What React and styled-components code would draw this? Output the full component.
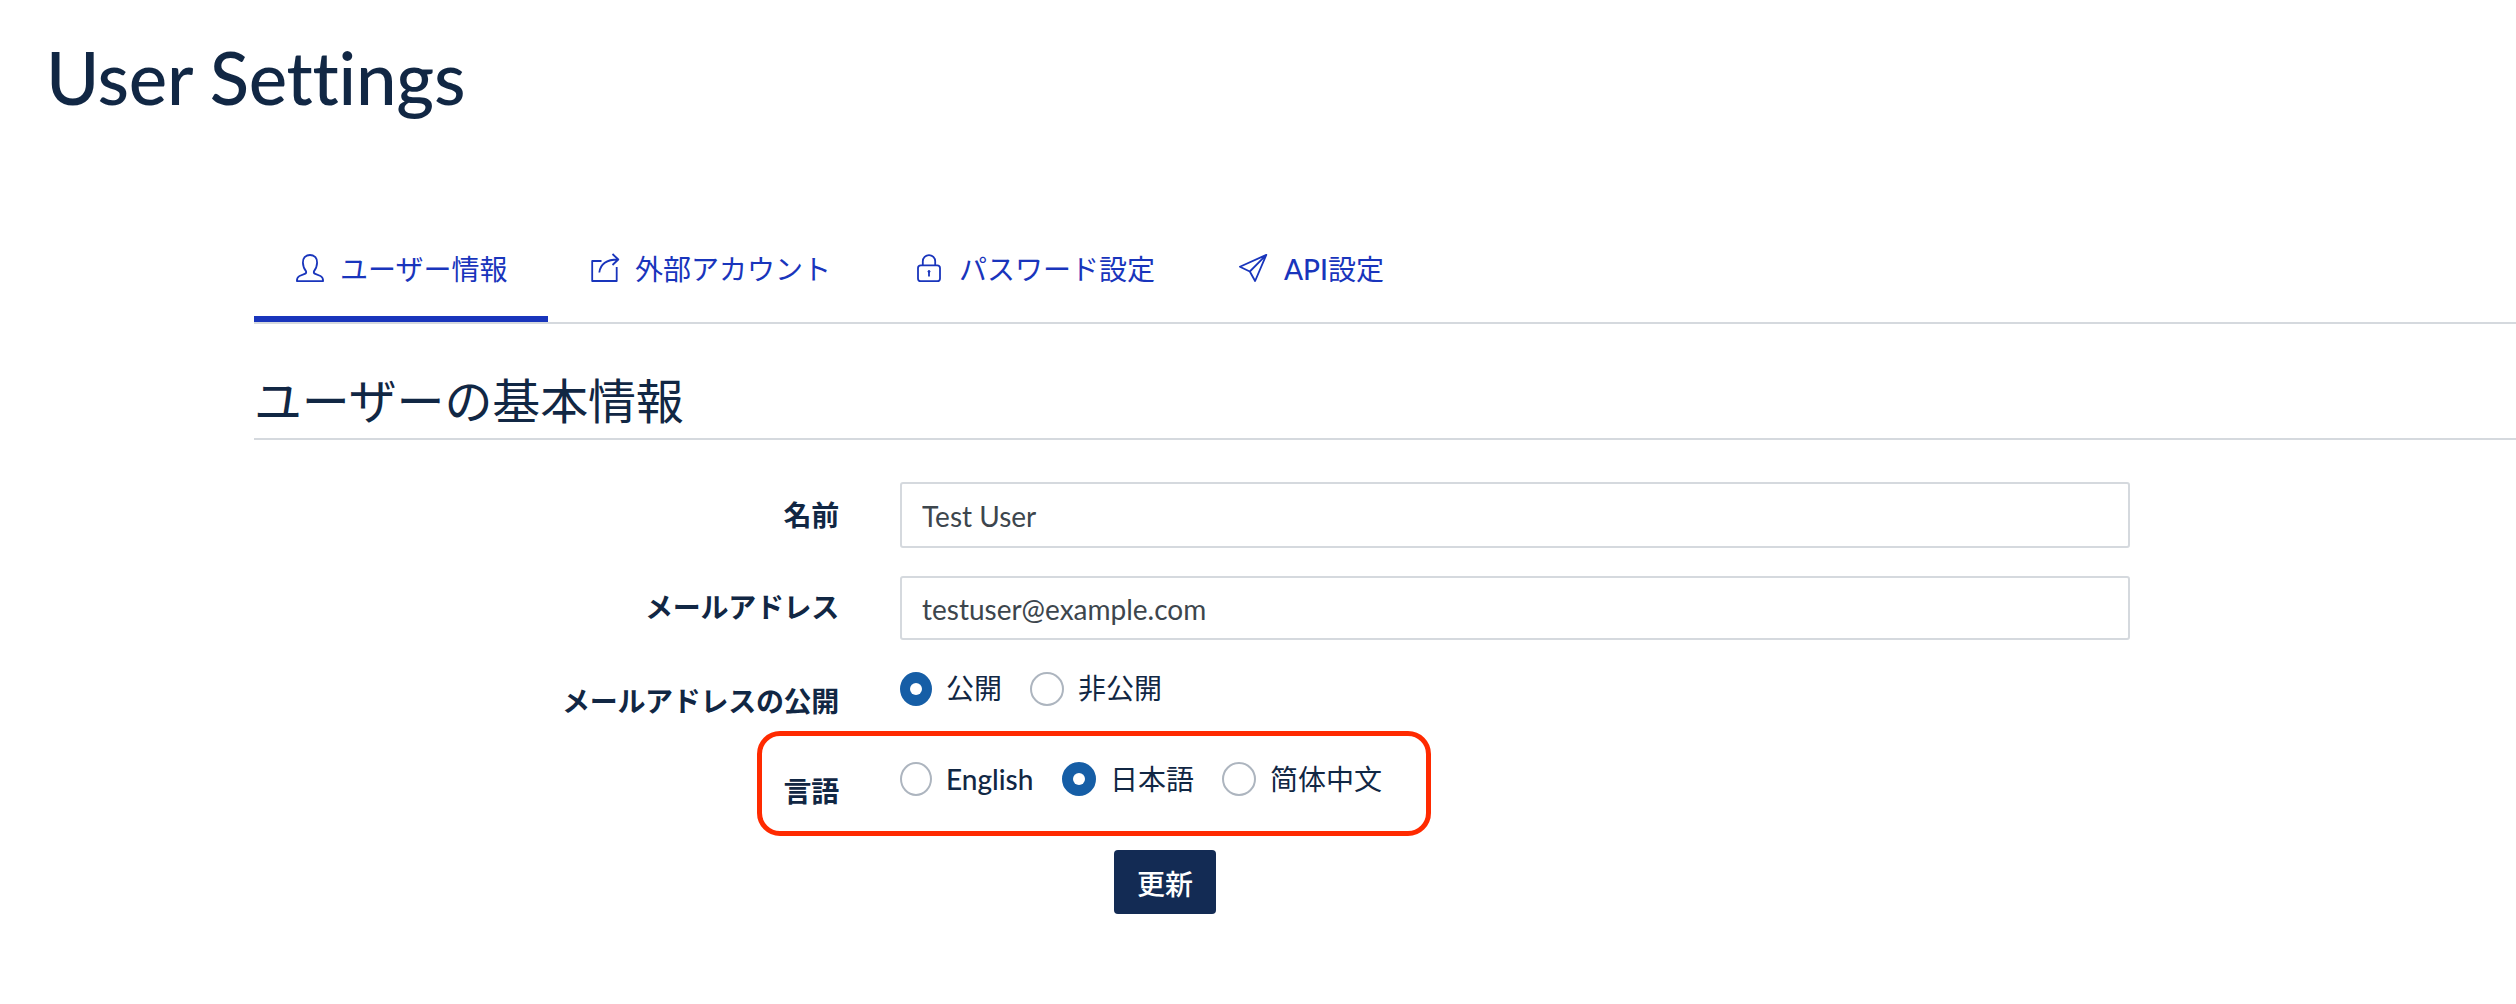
import React from 'react';
import styled, { createGlobalStyle } from 'styled-components';

const GlobalStyle = createGlobalStyle`
  *, *::before, *::after { box-sizing: border-box; }
  body {
    margin: 0;
    background: #fff;
    color: #112744;
    font-family: Lato, "Noto Sans CJK JP", sans-serif;
    font-size: 28px;
    font-variant-ligatures: none;
    overflow: hidden;
  }
`;

const Page = styled.main`
  height: 1004px;
  padding-top: 29px;
  overflow: hidden;
`;

const Title = styled.h1`
  margin: 0 0 0 46px;
  height: 96px;
  line-height: 96px;
  font-size: 72.5px;
  font-weight: 500;
  letter-spacing: -0.25px;
  white-space: nowrap;
`;

const Content = styled.section`
  margin: 87px 0 0 254px;
`;

const TabBar = styled.nav`
  display: flex;
  height: 112px;
  border-bottom: 2px solid #d5d9de;
`;

const Tab = styled.a`
  display: flex;
  align-items: center;
  width: ${(p) => p.$width}px;
  padding: 8px 0 0 40px;
  gap: ${(p) => p.$gap || 14}px;
  line-height: 40px;
  color: #1935bc;
  white-space: nowrap;
  border-bottom: 6px solid ${(p) => (p.$active ? '#1935bc' : 'transparent')};
`;

const TabText = styled.span`
  padding-top: 2px;
`;

const Latin = styled.span`
  font-weight: 500;
`;

const TabIcon = styled.svg`
  flex: none;
  width: 32px;
  height: 32px;
  fill: none;
  stroke: currentColor;
  stroke-width: 1.8;
  stroke-linejoin: round;
`;

const SectionTitle = styled.h2`
  margin: 0;
  height: 116px;
  padding-top: 41px;
  line-height: 72px;
  font-size: 48px;
  font-weight: 400;
  letter-spacing: -0.15px;
  border-bottom: 2px solid #d5d9de;
`;

const Form = styled.form`
  padding-top: 42px;
`;

const Field = styled.div`
  display: grid;
  grid-template-columns: 585px 1230px;
  column-gap: 61px;
  align-items: start;
  height: ${(p) => p.$height}px;
`;

const Label = styled.label`
  padding-top: ${(p) => p.$top}px;
  line-height: 40px;
  font-weight: 700;
  letter-spacing: -0.3px;
  text-align: right;
`;

const Input = styled.input`
  width: 100%;
  height: ${(p) => p.$height}px;
  padding: 2px 20px 0;
  border: 2px solid #d5d9de;
  border-radius: 3px;
  background: #fff;
  color: #3d464d;
  font: inherit;
  outline: none;
`;

const RadioGroup = styled.div`
  display: flex;
  align-items: center;
  height: 34px;
`;

const Option = styled.label`
  display: flex;
  align-items: center;
  gap: 14px;
  width: ${(p) => p.$width}px;
  line-height: 34px;
  white-space: nowrap;
`;

const OptionText = styled.span`
  padding-bottom: ${(p) => (p.$raised ? 2 : 0)}px;
`;

const Radio = styled.span`
  display: flex;
  flex: none;
  align-items: center;
  justify-content: center;
  width: ${(p) => p.$width || 34}px;
  height: 34px;
  border-radius: 50%;
  border: 2px solid ${(p) => (p.$checked ? '#165ea6' : '#adb5bf')};
  background: ${(p) => (p.$checked ? '#165ea6' : '#fff')};

  &::after {
    content: '';
    width: 12px;
    height: 12px;
    border-radius: 50%;
    background: #fff;
  }
`;

const Highlighted = styled.div`
  position: relative;

  &::after {
    content: '';
    position: absolute;
    left: 503px;
    top: -31px;
    width: 674px;
    height: 105px;
    border: 5px solid #ff2a00;
    border-radius: 23px;
    pointer-events: none;
  }
`;

const Submit = styled.button`
  display: block;
  margin-left: 860px;
  width: 102px;
  height: 64px;
  padding: 1px 0 0;
  border: 0;
  border-radius: 4px;
  background: #132b54;
  color: #fff;
  font: inherit;
  font-weight: 500;
`;

const UserIcon = () => (
  <TabIcon viewBox="0 0 32 32">
    <path d="M16 3c-4.700 0-7.300 3.300-7.100 7.800.1 3.500 1.200 6.200 3.200 8.600.4 1.500-.2 2-1.400 2.500L5.500 24c-2.300 1-2.600 2-2.600 5.100h26.200c0-3.100-.3-4.100-2.600-5.100l-5.200-2.100c-1.200-.5-1.800-1-1.400-2.500 2-2.400 3.100-5.100 3.200-8.600C23.300 6.300 20.700 3 16 3z" />
  </TabIcon>
);

const ShareIcon = () => (
  <TabIcon viewBox="0 0 32 32">
    <path d="M13.500 9H4.200v20h24.500V15M11.300 20.500C12.300 12.500 18 7.500 30 7.500M24.500 2l5.800 5.500-5.800 5.500" />
  </TabIcon>
);

const LockIcon = () => (
  <TabIcon viewBox="0 0 32 32">
    <rect x="6" y="13.300" width="22" height="15.900" rx="2.800" />
    <path d="M10.800 13.300V9.300a6.200 6.200 0 0 1 12.400 0v4M17 19.500v5" />
    <circle cx="17" cy="19.500" r="1" fill="currentColor" strokeWidth="1" />
  </TabIcon>
);

const PlaneIcon = () => (
  <TabIcon viewBox="0 0 32 32">
    <path d="M29.300 2.900L2.900 14.700l9.900 4.800 5.300 9.500zM29.300 2.900L12.800 19.500" />
  </TabIcon>
);

const TABS = [
  { label: 'ユーザー情報', width: 294, Icon: UserIcon, active: true },
  { label: '外部アカウント', width: 324, gap: 15, Icon: ShareIcon },
  { label: 'パスワード設定', width: 325, gap: 15, Icon: LockIcon },
  { latin: 'API', label: '設定', width: 230, gap: 15, Icon: PlaneIcon },
];

export default function App() {
  return (
    <>
      <GlobalStyle />
      <Page>
        <Title>User Settings</Title>
        <Content>
          <TabBar>
            {TABS.map(({ latin, label, width, gap, Icon, active }) => (
              <Tab key={label} $width={width} $gap={gap} $active={active}>
                <Icon />
                <TabText>
                  {latin && <Latin>{latin}</Latin>}
                  {label}
                </TabText>
              </Tab>
            ))}
          </TabBar>
          <SectionTitle>ユーザーの基本情報</SectionTitle>
          <Form>
            <Field $height={94}>
              <Label $top={13}>名前</Label>
              <Input $height={66} defaultValue="Test User" />
            </Field>
            <Field $height={96}>
              <Label $top={11}>メールアドレス</Label>
              <Input $height={64} defaultValue="testuser@example.com" />
            </Field>
            <Field $height={90}>
              <Label $top={9}>メールアドレスの公開</Label>
              <RadioGroup>
                <Option $width={130}>
                  <Radio $checked $width={32} />
                  <OptionText $raised>公開</OptionText>
                </Option>
                <Option $width={160}>
                  <Radio />
                  <OptionText $raised>非公開</OptionText>
                </Option>
              </RadioGroup>
            </Field>
            <Highlighted>
              <Field $height={88}>
                <Label $top={9}>言語</Label>
                <RadioGroup>
                  <Option $width={162}>
                    <Radio $width={32} />
                    <Latin>English</Latin>
                  </Option>
                  <Option $width={160}>
                    <Radio $checked />
                    <OptionText>日本語</OptionText>
                  </Option>
                  <Option $width={180}>
                    <Radio />
                    <OptionText lang="zh-CN">简体中文</OptionText>
                  </Option>
                </RadioGroup>
              </Field>
            </Highlighted>
            <Submit type="button">更新</Submit>
          </Form>
        </Content>
      </Page>
    </>
  );
}
